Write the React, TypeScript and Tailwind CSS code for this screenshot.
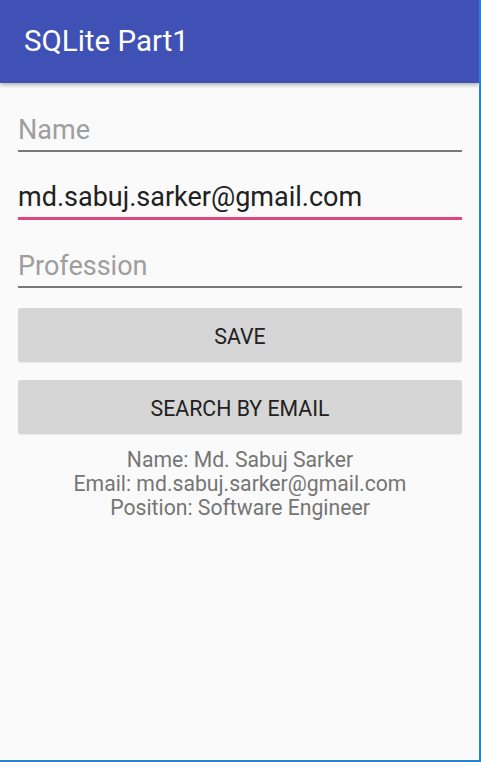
export default function App() {
  return (
    <div className="w-[481px] h-[762px] bg-[#fafafa] border-r-2 border-b-2 border-[#2a82c9] flex flex-col font-['Roboto',sans-serif] overflow-hidden">
      {/* Toolbar */}
      <div className="h-[83px] shrink-0 bg-[#3f51b5] flex items-center px-6 shadow-[0_2px_4px_rgba(0,0,0,0.3)] relative z-10">
        <h1 className="text-[29.5px] text-white leading-none">SQLite Part1</h1>
      </div>

      <div className="flex flex-col pl-[18px] pr-[17px]">
        {/* Name */}
        <div className="h-[67px] flex items-end pb-[6px] text-[27px] text-[#9e9e9e] leading-none">
          Name
        </div>
        <div className="h-[2px] bg-[#777777]" />

        {/* Email */}
        <div className="h-[65px] flex items-end pb-[6px] text-[27px] text-[#212121] leading-none">
          md.sabuj.sarker@gmail.com
        </div>
        <div className="h-[3px] bg-[#e2467c]" />

        {/* Profession */}
        <div className="h-[66px] flex items-end pb-[6px] text-[27px] text-[#9e9e9e] leading-none">
          Profession
        </div>
        <div className="h-[2px] bg-[#777777]" />

        {/* Buttons */}
        <button className="mt-[20px] h-[54px] pt-[3px] rounded-[3px] bg-[#d6d6d6] text-[21.3px] text-[#212121] shadow-[0_1px_1px_rgba(0,0,0,0.08)]">
          SAVE
        </button>
        <button className="mt-[18px] h-[54px] pt-[3px] rounded-[3px] bg-[#d6d6d6] text-[21.3px] text-[#212121] shadow-[0_1px_1px_rgba(0,0,0,0.08)]">
          SEARCH BY EMAIL
        </button>

        {/* Result */}
        <div className="mt-[14px] text-center text-[21.2px] leading-[24px] text-[#757575]">
          <p>Name: Md. Sabuj Sarker</p>
          <p>Email: md.sabuj.sarker@gmail.com</p>
          <p>Position: Software Engineer</p>
        </div>
      </div>
    </div>
  );
}
